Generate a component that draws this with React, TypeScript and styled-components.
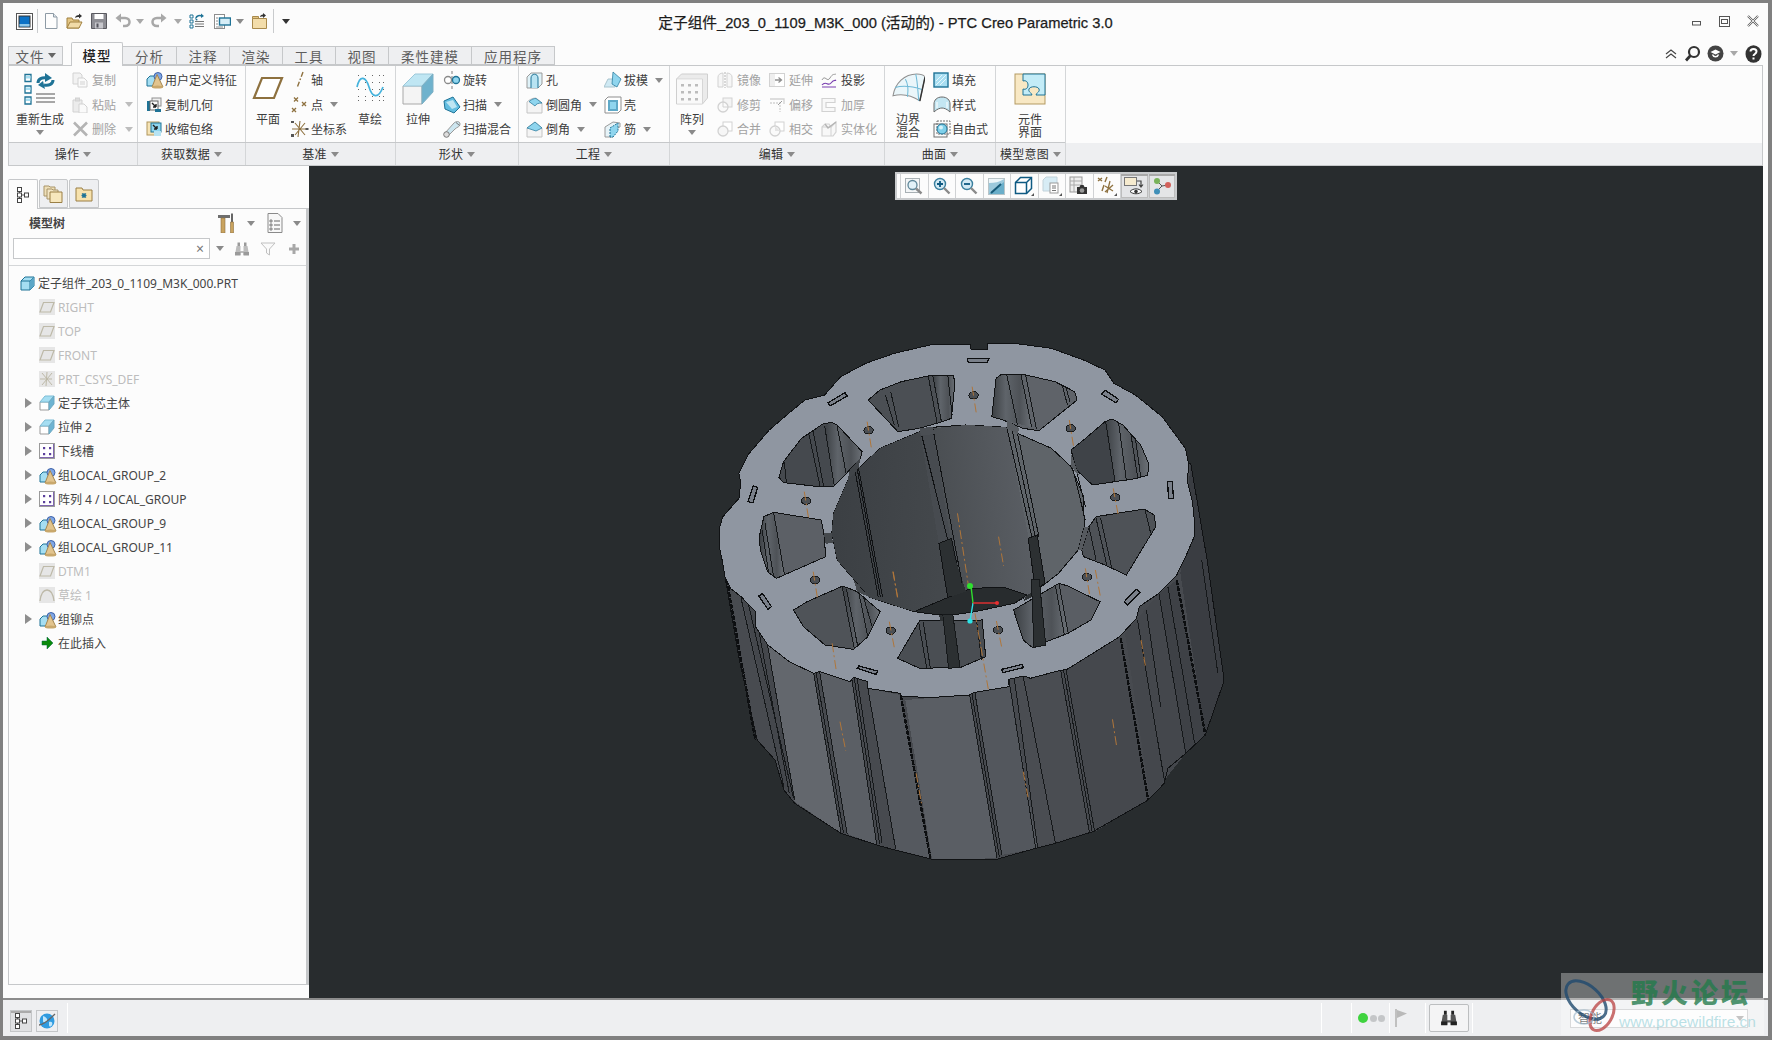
import React from 'react';
import styled, { createGlobalStyle } from 'styled-components';

const FONT = `"Noto Sans", "Noto Sans CJK SC", sans-serif`;

const GlobalStyle = createGlobalStyle`
  html, body {
    margin: 0;
    width: 1772px;
    height: 1040px;
    overflow: hidden;
    background: #fcfcfc;
  }
  * { box-sizing: border-box; }
`;

const Window = styled.div`
  width: 1772px;
  height: 1040px;
  border: solid #808080;
  border-width: 3px 4px 4px 3px;
  background: #fcfcfc;
  display: flex;
  flex-direction: column;
  font-family: ${FONT};
  font-size: 12px;
  color: #3c3c3c;
  position: relative;
`;

const TitleBar = styled.div`
  height: 39px;
  padding-bottom: 3px;
  display: grid;
  grid-template-columns: 1fr auto 1fr;
  align-items: center;
`;

const Qat = styled.div`
  display: flex;
  align-items: center;
  height: 100%;
  padding-left: 11px;
`;

const QatSlot = styled.div<{ $w: number }>`
  width: ${(p) => p.$w}px;
  display: flex;
  justify-content: center;
  align-items: center;
`;

const VSep = styled.div<{ $h?: number }>`
  width: 1px;
  height: ${(p) => p.$h ?? 24}px;
  background: #c9cbcd;
`;

const Caret = styled.span<{ $c?: string; $ml?: number; $mr?: number }>`
  display: inline-block;
  width: 0;
  height: 0;
  border-left: 4px solid transparent;
  border-right: 4px solid transparent;
  border-top: 5px solid ${(p) => p.$c ?? '#8a8a8a'};
  margin-left: ${(p) => p.$ml ?? 0}px;
  margin-right: ${(p) => p.$mr ?? 0}px;
  flex: none;
`;

const Spaced = styled.div<{ $ml?: number; $mr?: number }>`
  margin-left: ${(p) => p.$ml ?? 0}px;
  margin-right: ${(p) => p.$mr ?? 0}px;
  display: flex;
  flex: none;
`;

const Title = styled.div`
  font-family: "Liberation Sans", "Noto Sans CJK SC", sans-serif;
  font-size: 14.7px;
  color: #1c1c1c;
  -webkit-text-stroke: 0.25px #1c1c1c;
  white-space: nowrap;
`;

const WinControls = styled.div`
  display: flex;
  justify-content: flex-end;
  align-items: center;
  gap: 17px;
  padding-right: 9px;
`;

const TabRow = styled.div`
  height: 23px;
  display: flex;
  align-items: flex-end;
  padding-left: 5px;
  position: relative;
`;

const Tab = styled.div<{ $w: number; $active?: boolean; $first?: boolean }>`
  width: ${(p) => p.$w}px;
  height: ${(p) => (p.$active ? 24 : 19)}px;
  margin-right: ${(p) => (p.$first ? 8 : 0)}px;
  margin-bottom: ${(p) => (p.$active ? -1 : 0)}px;
  background: ${(p) => (p.$active ? '#fcfcfc' : '#eeeff1')};
  border: 1px solid #c6c8ca;
  border-left-width: ${(p) => (p.$first || p.$active ? 1 : 0)}px;
  border-bottom-width: ${(p) => (p.$active ? 0 : 1)}px;
  border-radius: ${(p) => (p.$active ? '2px 2px 0 0' : 0)};
  display: flex;
  align-items: center;
  justify-content: center;
  gap: 3px;
  font-size: 13.5px;
  letter-spacing: 1px;
  color: ${(p) => (p.$active ? '#222' : '#5d5d5d')};
  font-weight: ${(p) => (p.$active ? 500 : 400)};
  position: relative;
  z-index: ${(p) => (p.$active ? 2 : 1)};
`;

const HelpIcons = styled.div`
  margin-left: auto;
  margin-right: 6px;
  align-self: center;
  display: flex;
  align-items: center;
`;

const Ribbon = styled.div`
  margin: 0 5px;
  height: 101px;
  border: 1px solid #c6c8ca;
  display: flex;
  background: linear-gradient(#fcfcfc 0 77px, #eeeff1 77px);
`;

const Group = styled.div<{ $w: number }>`
  width: ${(p) => p.$w}px;
  display: flex;
  flex-direction: column;
  border-right: 1px solid #d4d6d8;
`;

/* content sits a pixel left of the group's divider, except in the first group */
const GroupBody = styled.div<{ $pl?: number; $first?: boolean }>`
  height: 77px;
  margin-left: ${(p) => (p.$first ? 0 : -1)}px;
  padding: 2px 0 0 ${(p) => p.$pl ?? 0}px;
  display: flex;
  border-bottom: 1px solid #c6c8ca;
`;

const GroupLabel = styled.div`
  flex: 1;
  display: flex;
  align-items: center;
  justify-content: center;
  gap: 4px;
  color: #333;
  letter-spacing: 0.2px;
`;

const Large = styled.div<{ $w: number }>`
  width: ${(p) => p.$w}px;
  flex: none;
  padding-top: 5px;
  display: flex;
  flex-direction: column;
  align-items: center;
  line-height: 13px;
  text-align: center;
`;

const LargeIcon = styled.div`
  height: 40px;
`;

const LargeCaret = styled(Caret)`
  margin-top: 4px;
`;

const SmallCol = styled.div<{ $w: number; $ml?: number }>`
  width: ${(p) => p.$w}px;
  margin-left: ${(p) => p.$ml ?? 0}px;
  flex: none;
`;

const SmallRow = styled.div<{ $off?: boolean; $gap?: number }>`
  height: 24.5px;
  display: flex;
  align-items: center;
  gap: ${(p) => p.$gap ?? 3}px;
  white-space: nowrap;
  color: ${(p) => (p.$off ? '#a2a2a2' : '#3c3c3c')};
`;

const RowCaret = styled(Caret)`
  margin-left: 5px;
`;

const Body = styled.div`
  flex: 1;
  display: flex;
  min-height: 0;
`;

const LeftCol = styled.div`
  width: 306px;
  padding: 13px 0 13px 5px;
  display: flex;
  flex-direction: column;
  flex: none;
`;

const PanelTabs = styled.div`
  height: 29px;
  display: flex;
  gap: 1px;
`;

const PanelTab = styled.div<{ $active?: boolean }>`
  width: 29.5px;
  height: ${(p) => (p.$active ? 30 : 29)}px;
  background: ${(p) => (p.$active ? '#fcfcfc' : '#eeeff1')};
  border: 1px solid #c6c8ca;
  border-bottom-width: ${(p) => (p.$active ? 0 : 1)}px;
  border-radius: 2px 2px 0 0;
  display: flex;
  align-items: center;
  justify-content: center;
  position: relative;
  z-index: 1;
`;

const Panel = styled.div`
  flex: 1;
  border: solid #c6c8ca;
  border-width: 1px 3px 1px 1px;
  display: flex;
  flex-direction: column;
`;

const PanelHead = styled.div`
  height: 57px;
  border-bottom: 1px solid #d4d6d8;
  padding: 0 0 0 4px;
`;

const HeadTop = styled.div`
  height: 28px;
  margin-bottom: 1px;
  display: flex;
  align-items: center;
  padding-right: 4px;
`;

const HeadTitle = styled.div`
  font-weight: 700;
  margin-left: 16px;
  color: #444;
  flex: 1;
`;

const HeadBottom = styled.div`
  display: flex;
  align-items: center;
`;

const SearchBox = styled.div`
  width: 197px;
  height: 21px;
  background: #fff;
  border: 1px solid #c6c8ca;
  display: flex;
  align-items: center;
  justify-content: flex-end;
  padding-right: 5px;
  color: #777;
  font-size: 14px;
  line-height: 1;
`;

const Tree = styled.div`
  padding-top: 5px;
`;

const TreeRow = styled.div<{ $off?: boolean; $root?: boolean }>`
  height: 24px;
  display: flex;
  align-items: center;
  padding-left: ${(p) => (p.$root ? 11 : 16)}px;
  color: ${(p) => (p.$off ? '#bdbdbd' : '#444')};
  white-space: nowrap;
`;

const Twist = styled.span<{ $hide?: boolean }>`
  width: 0;
  height: 0;
  border-top: 5px solid transparent;
  border-bottom: 5px solid transparent;
  border-left: 7px solid ${(p) => (p.$hide ? 'transparent' : '#8e8e8e')};
  margin-right: 7px;
  flex: none;
`;

const TreeIcon = styled.div<{ $off?: boolean }>`
  width: 16px;
  height: 16px;
  margin-right: 3px;
  flex: none;
  background: ${(p) => (p.$off ? '#e6e6e6' : 'transparent')};
`;

const RootIcon = styled.div`
  width: 15px;
  height: 15px;
  margin-right: 3px;
`;

const Viewport = styled.div`
  flex: 1;
  margin-right: 5px;
  background: #282c2e;
  position: relative;
`;

const ModelSvg = styled.svg`
  display: block;
  width: 100%;
  height: 100%;
  * { vector-effect: non-scaling-stroke; }
`;

const ViewBar = styled.div`
  position: absolute;
  left: 586px;
  top: 6px;
  height: 28px;
  background: #fcfcfc;
  border: 2px solid #c9cbcd;
  padding-left: 3px;
  display: flex;
  align-items: center;
`;

const ViewBtn = styled.div<{ $on?: boolean }>`
  width: 27.5px;
  height: 24px;
  border-left: 1px solid #d0d2d4;
  display: flex;
  align-items: center;
  justify-content: center;
  background: ${(p) => (p.$on ? '#e4e5e7' : 'transparent')};
  box-shadow: ${(p) => (p.$on ? 'inset 0 2px 0 #a8a8a8, inset 0 0 0 1px #bdbdbd' : 'none')};
`;

const StatusBar = styled.div`
  height: 38px;
  border-top: 2px solid #8c8c8c;
  background: #eeeff1;
  display: flex;
  align-items: center;
  padding: 0 0 0 7px;
`;

const StatusBtn = styled.div<{ $on?: boolean }>`
  width: 22px;
  height: 22px;
  margin-right: 4px;
  margin-top: 6px;
  background: ${(p) => (p.$on ? '#e0e1e3' : 'transparent')};
  border: 1px solid #c4c6c8;
  box-shadow: ${(p) => (p.$on ? 'inset 0 2px 0 #aaa' : 'none')};
  display: flex;
  align-items: center;
  justify-content: center;
`;

const StatusSep = styled.div<{ $ml: number }>`
  width: 1px;
  height: 30px;
  margin-left: ${(p) => p.$ml}px;
  background: #d4d6d8;
  border-right: 1px solid #fff;
  flex: none;
`;

const Dot = styled.span<{ $on?: boolean; $ml: number }>`
  width: ${(p) => (p.$on ? 10 : 7)}px;
  height: ${(p) => (p.$on ? 10 : 7)}px;
  margin-left: ${(p) => p.$ml}px;
  border-radius: 50%;
  background: ${(p) => (p.$on ? '#3fd33f' : '#c4c6c8')};
  flex: none;
`;

const FindBtn = styled.div`
  width: 40px;
  height: 28px;
  margin-left: 3px;
  border: 1px solid #bcbec0;
  border-radius: 2px;
  background: #f4f4f5;
  display: flex;
  align-items: center;
  justify-content: center;
  flex: none;
`;

const SmartSelect = styled.div`
  width: 178px;
  height: 19px;
  margin-left: 97px;
  background: #fcfcfc;
  border: 1px solid #c6c8ca;
  display: flex;
  align-items: center;
  justify-content: space-between;
  padding: 0 3px 0 7px;
  flex: none;
`;

const Watermark = styled.div`
  position: absolute;
  left: 1558px;
  top: 970px;
  width: 203px;
  height: 62px;
  background: rgba(255, 255, 255, 0.33);
  overflow: hidden;
`;

const WmLogo = styled.svg`
  position: absolute;
  left: 1px;
  top: 2px;
`;

const WmTitle = styled.div`
  position: absolute;
  left: 70px;
  top: 2px;
  font-family: "Noto Sans CJK SC", sans-serif;
  font-weight: 900;
  font-size: 27px;
  letter-spacing: 3px;
  line-height: 34px;
  color: rgba(34, 122, 74, 0.8);
  white-space: nowrap;
`;

const WmUrl = styled.div`
  position: absolute;
  left: 58px;
  top: 40px;
  font-family: "Liberation Sans", sans-serif;
  font-size: 15.5px;
  line-height: 18px;
  color: rgba(120, 196, 206, 0.5);
  white-space: nowrap;
`;

const SvgEl = styled.svg`
  display: block;
  flex: none;
`;

/* ---------- icons ---------- */

const BLUE = '#a5def2';
const TEAL = '#1f7396';
const TAN = '#8e713f';
const OFF = '#d2d2d2';
const OFFD = '#b4b4b4';

const Svg = ({ s = 16, v = 16, children }: { s?: number; v?: number; children: React.ReactNode }) => (
  <SvgEl width={s} height={s} viewBox={`0 0 ${v} ${v}`}>
    {children}
  </SvgEl>
);

const GroupIcon = () => (
  <Svg s={18} v={18}>
    <path d="M1 8l3-3h7v7l-3 3H1z" fill={BLUE} stroke={TEAL} />
    <circle cx="12" cy="5.5" r="4" fill="#7fa6e6" stroke="#3f63a8" />
    <path d="M11 3.5L6 16h11z" fill="#e2c48e" stroke="#a38650" />
    <ellipse cx="11.5" cy="16" rx="5.5" ry="1.5" fill="#c9a86c" />
  </Svg>
);

const ExtrudeSmall = () => (
  <Svg s={16} v={16}>
    <path d="M1 7h9v8H1z" fill="#fff" stroke="#9b9b9b" />
    <path d="M1 7l5-6h9l-5 6z" fill={BLUE} stroke="#7cbdd6" />
    <path d="M10 7l5-6v8l-5 6z" fill="#6db4d2" stroke="#6da9c2" />
  </Svg>
);

const PatternSmall = () => (
  <Svg s={16} v={16}>
    <rect x="0.5" y="0.5" width="15" height="15" fill="#fff" stroke="#9a9a9a" />
    <path d="M14.5 1v14M1 14.5h14" stroke="#8066b0" />
    {[4, 10].map((x) => [4, 10].map((y) => <rect key={`${x}${y}`} x={x} y={y} width="2.2" height="2.2" fill="#5b3f9c" />))}
  </Svg>
);

const PlaneDatum = () => (
  <Svg>
    <path d="M1 13L4.5 3.5H15L11.5 13z" fill="none" stroke="#bdb9a8" strokeWidth="1.2" />
  </Svg>
);

const TreeGlyph = ({ s = 16 }: { s?: number }) => (
  <Svg s={s} v={16}>
    <path d="M4.5 4v8M4.5 8H10" stroke="#555" fill="none" />
    <rect x="2.5" y="0.5" width="4" height="4" fill="#fff" stroke="#444" />
    <rect x="2.5" y="6" width="4" height="4" fill="#fff" stroke="#444" />
    <rect x="2.5" y="11.5" width="4" height="4" fill="#fff" stroke="#444" />
    <rect x="9.5" y="6" width="4" height="4" fill="#fff" stroke="#444" />
  </Svg>
);

const Binoculars = ({ s = 16, c = '#bcbcbc', d = '#9a9a9a' }: { s?: number; c?: string; d?: string }) => (
  <Svg s={s} v={16}>
    <path d="M2.500 5h4v5h3V5h4l1.500 9H9.500v-2h-3v2H1z" fill={c} />
    <path d="M3.500 1.500h2.500v3.500H3.500zM10 1.500h2.500v3.500H10z" fill={d} />
    <path d="M1 11h5.500v3.500H1zM9.500 11H15v3.500H9.500z" fill={d} />
  </Svg>
);

const QAT_ICONS = {
  app: (
    <Svg s={17} v={17}>
      <rect x="0.5" y="0.5" width="16" height="16" fill="#fff" stroke="#555" />
      <rect x="3" y="3" width="11" height="11" fill="#0c72c6" stroke="#333" />
      <rect x="3.500" y="11" width="10" height="2.500" fill="#8fc8ea" />
    </Svg>
  ),
  file: (
    <Svg s={16} v={16}>
      <path d="M2.500 0.500h8l3.500 3.500v11.500H2.500z" fill="#fdfdfd" stroke="#8d9aa5" />
      <path d="M10.500 0.500v3.500h3.500" fill="#dfe6ec" stroke="#8d9aa5" />
    </Svg>
  ),
  open: (
    <Svg s={17} v={17}>
      <path d="M1 15V5h5l1 2h6v8z" fill="#e4c684" stroke="#a0803f" />
      <path d="M1 15l3-6h12l-3 6z" fill="#f1dba8" stroke="#a0803f" />
      <path d="M9 5c0-2 2-3 4-3V0.500l3 2.500-3 2.500V4c-1.500 0-3 0-4 1z" fill="#333" />
    </Svg>
  ),
  save: (
    <Svg s={16} v={16}>
      <path d="M0.500 0.500h15v15H0.500z" fill="#8e8e94" stroke="#5a5a60" />
      <rect x="3.500" y="1" width="9" height="5" fill="#fff" />
      <rect x="4" y="9.500" width="8" height="6" fill="#c7c7cc" />
      <rect x="5.500" y="10.500" width="2" height="4" fill="#55555c" />
    </Svg>
  ),
  undo: (
    <Svg s={16} v={16}>
      <path d="M5 5h5c6 0 6 8 0 8H8" fill="none" stroke="#a8a8a8" strokeWidth="2.500" />
      <path d="M6 0.500v9L0.500 5z" fill="#a8a8a8" />
    </Svg>
  ),
  redo: (
    <Svg s={16} v={16}>
      <path d="M11 5H6c-6 0-6 8 0 8h2" fill="none" stroke="#a8a8a8" strokeWidth="2.500" />
      <path d="M10 0.500v9L15.500 5z" fill="#a8a8a8" />
    </Svg>
  ),
  regen: (
    <Svg s={16} v={16}>
      <path d="M1 2h3v3H1zM1 7h3v3H1zM1 12h3v3H1z" fill="#fff" stroke={TEAL} />
      <path d="M7 5a4 3 0 0 1 6-2" fill="none" stroke={TEAL} strokeWidth="1.600" />
      <path d="M12 0.500l3 2.500-3 2z M9 7l-3-2.500 1 3z" fill={TEAL} />
      <path d="M6 8.500h9M6 11h9M6 13.500h9" stroke="#777" />
    </Svg>
  ),
  win: (
    <Svg s={17} v={17}>
      <rect x="0.500" y="1.500" width="10" height="14" fill="#fff" stroke="#8e8e8e" />
      <rect x="5.500" y="5" width="11" height="7" fill="#d7eef7" stroke={TEAL} strokeWidth="1.400" />
      <path d="M2 5h2M2 8h2M2 11h2M2 14h7" stroke="#8e8e8e" />
    </Svg>
  ),
  folder: (
    <Svg s={17} v={17}>
      <path d="M1.500 15.500V5.500h14v10z" fill="#f3ddaa" stroke="#a98a4c" />
      <path d="M1.500 5.500V3.500h6v2z" fill="#e4c684" stroke="#a98a4c" />
      <path d="M9 4c0-1.500 1.500-2.500 3-2.500V0l3 2.500L12 5V3.500C11 3.500 10 3.500 9 4z" fill="#333" />
    </Svg>
  ),
};

const R = {
  regen: (
    <Svg s={32} v={32}>
      <path d="M1 1.500h6v7H1zM1 13h6v7H1zM1 24h6v7H1z" fill="#fff" stroke={TEAL} strokeWidth="1.300" />
      <path d="M2 3h4.500v2.500H2zM2 14.500h4.500V17H2zM2 25.500h4.500V28H2z" fill={BLUE} />
      <path d="M14 10c0-4 4-6 9-5" fill="none" stroke={TEAL} strokeWidth="3" />
      <path d="M21 0l7 5-7 4z" fill={TEAL} />
      <path d="M29 7c0 4-4 6-9 5" fill="none" stroke={TEAL} strokeWidth="3" />
      <path d="M21 16l-7-4 5-4z" fill={TEAL} />
      <path d="M12 21h19M12 25h19M12 29h19" stroke="#8a8a8a" strokeWidth="1.600" />
    </Svg>
  ),
  copy: (
    <Svg>
      <path d="M1 1h7l2 2v9H1z" fill="#f2f2f2" stroke={OFF} />
      <path d="M6 6h6l3 3v6H6z" fill="#fafafa" stroke={OFF} />
      <path d="M8 10h5M8 12h5" stroke={OFF} />
    </Svg>
  ),
  paste: (
    <Svg>
      <path d="M1 3h9v12H1z" fill="#ececec" stroke={OFF} />
      <rect x="3.500" y="1" width="4" height="3" fill="#ddd" stroke={OFF} />
      <path d="M7 7h5l3 3v6H7z" fill="#fafafa" stroke={OFF} />
    </Svg>
  ),
  del: (
    <Svg>
      <path d="M2 1.500L15 14.500M15 1.500L2 14.500" stroke={OFFD} strokeWidth="2.600" />
    </Svg>
  ),
  udf: <GroupIcon />,
  copyGeom: (
    <Svg>
      <path d="M1 14V4h3v10z" fill={TEAL} />
      <rect x="6" y="1" width="9" height="8" fill="#f0f0f0" stroke="#8f8f8f" />
      <rect x="4" y="4" width="8" height="9" fill="#fafafa" stroke="#666" />
      <path d="M6 6l4 4M10 10V7M10 10H7" stroke="#222" strokeWidth="1.400" fill="none" />
      <rect x="9" y="12" width="6" height="3" fill={TEAL} />
    </Svg>
  ),
  shrink: (
    <Svg>
      <rect x="1" y="1" width="12" height="13" fill="#f6e4b6" stroke="#b0965c" />
      <rect x="5" y="2" width="10" height="9" fill="#8fd5ee" stroke={TEAL} />
      <path d="M7 4l4 4M11 8V5M11 8H8" stroke="#222" strokeWidth="1.400" fill="none" />
      <rect x="8" y="10" width="7" height="5" fill="#b7e3f2" />
    </Svg>
  ),
  plane: (
    <Svg s={32} v={32}>
      <path d="M2 25L10 5h20l-8 20z" fill="#fff" stroke={TAN} strokeWidth="2.200" />
    </Svg>
  ),
  axis: (
    <Svg s={18} v={18}>
      <path d="M12 1L6 17" stroke={TAN} strokeWidth="1.400" strokeDasharray="5 2 1.500 2" />
    </Svg>
  ),
  point: (
    <Svg s={18} v={18}>
      <path d="M3 1.500l4 4M7 1.500l-4 4M11 6l4 4M15 6l-4 4M1 12l4 4M5 12l-4 4" stroke={TAN} strokeWidth="1.300" />
    </Svg>
  ),
  csys: (
    <Svg s={18} v={18}>
      <path d="M9 1L7 17M1 9l14 0M4 3l10 12M14 3L4 15" stroke={TAN} strokeWidth="1.100" />
      <path d="M0 1h3v2H0zM14.500 8h3v2h-3zM0 14h3v3H0z" fill="#555" />
    </Svg>
  ),
  sketch: (
    <Svg s={28} v={28}>
      {[2, 9, 16, 23, 27].map((x) => [2, 9, 16, 23, 27].map((y) => <rect key={`${x}-${y}`} x={x} y={y} width="1" height="1" fill="#666" />))}
      <path d="M1 14C4 1 10 4 13 14s9 13 14 0" fill="none" stroke="#45b3dd" strokeWidth="1.700" />
    </Svg>
  ),
  extrude: (
    <Svg s={32} v={32}>
      <path d="M1 13h19v18H1z" fill="#f4f4f4" stroke="#a8a8a8" />
      <path d="M1 13L13 1h18L20 13z" fill="#bfe6f3" stroke="#9cc8da" />
      <path d="M20 13L31 1v18L20 31z" fill="#6fb2cd" stroke="#7fb0c4" />
    </Svg>
  ),
  revolve: (
    <Svg s={18} v={18}>
      <path d="M9 0v18" stroke="#7d7d7d" strokeDasharray="3 2" />
      <circle cx="5" cy="9" r="3.500" fill="#fff" stroke="#8a8a8a" strokeWidth="1.300" />
      <circle cx="13" cy="9" r="3.500" fill="#8fd5ee" stroke={TEAL} strokeWidth="1.300" />
    </Svg>
  ),
  sweep: (
    <Svg s={18} v={18}>
      <path d="M1 5l9-4 7 10-6 6-9-4z" fill="#63bde0" stroke={TEAL} />
      <path d="M3 6l7-2 4 7-5 2z" fill="#bfe6f3" />
    </Svg>
  ),
  sweptBlend: (
    <Svg s={18} v={18}>
      <path d="M2 13L11 3c2-2 6-2 6 1s-3 3-5 5l-7 7z" fill="#cde6f0" stroke="#999" />
      <circle cx="3.500" cy="14.500" r="2.800" fill="#ddd" stroke="#777" />
      <path d="M13 2.500l3.500 3" stroke="#777" />
    </Svg>
  ),
  hole: (
    <Svg s={18} v={18}>
      <path d="M1 6l4-4h11v11l-4 4H1z" fill="#dff2f8" stroke="#9a9a9a" />
      <path d="M5 17V7c0-5 7-5 7 0v10" fill="#b8e3f2" stroke={TEAL} />
    </Svg>
  ),
  round: (
    <Svg s={18} v={18}>
      <path d="M1 6c3-3 6-4 9-4l6 5v10H1z" fill="#f4f4f4" stroke="#c4c4c4" />
      <path d="M3 5.500C6 3 8 2.500 10 2.500l6 4.500c-4 0-6 1-7 3z" fill="#8fd5ee" stroke={TEAL} strokeWidth="0.700" />
    </Svg>
  ),
  chamfer: (
    <Svg s={18} v={18}>
      <path d="M1 8l8-6 7 6v9H1z" fill="#f4f4f4" stroke="#c4c4c4" />
      <path d="M1 8l8-6 7 6-6 3z" fill="#8fd5ee" stroke={TEAL} strokeWidth="0.700" />
    </Svg>
  ),
  draft: (
    <Svg s={18} v={18}>
      <path d="M0 16l4-8h7v8z" fill="#cfe9f3" stroke="#a8c4ce" />
      <path d="M9 1l8 7-4 8-5-3z" fill="#8fd5ee" stroke={TEAL} strokeWidth="0.700" />
    </Svg>
  ),
  shell: (
    <Svg s={18} v={18}>
      <path d="M1 4l3-3h13v13l-3 3H1z" fill="#fff" stroke="#8f8f8f" />
      <rect x="4" y="4" width="10" height="11" fill="#5ea9c8" />
      <rect x="6" y="6" width="6" height="7" fill="#8fd5ee" />
    </Svg>
  ),
  rib: (
    <Svg s={18} v={18}>
      <path d="M1 17V7l8-5 7 1v4l-7 2v8z" fill="#e6f3f8" stroke="#9a9a9a" />
      <path d="M6 17V8l8-5v8l-5 6z" fill="#8fd5ee" stroke={TEAL} strokeDasharray="2 1" />
    </Svg>
  ),
  pattern: (
    <Svg s={32} v={32}>
      <path d="M0.500 6l5-5h26v24l-5 6H0.500z" fill="#ebebeb" stroke="#cfcfcf" />
      <path d="M26.500 6v25M0.500 6h26" stroke="#d6d6d6" />
      <rect x="1" y="6.500" width="25" height="24" fill="#f9f9f9" />
      {[5, 12, 19].map((x) => [11, 18, 25].map((y) => <rect key={`${x}-${y}`} x={x} y={y} width="3" height="2.500" fill="#bcbcbc" />))}
    </Svg>
  ),
  mirror: (
    <Svg>
      <path d="M1 15V5c0-2 2-4 5-4v14zM10 1c3 0 5 2 5 4v10h-5z" fill="#f6f6f6" stroke={OFF} />
      <path d="M8 0v16" stroke={OFFD} strokeDasharray="2 1" />
    </Svg>
  ),
  extend: (
    <Svg>
      <rect x="0.500" y="1.500" width="15" height="13" fill="#fff" stroke={OFF} />
      <rect x="1" y="2" width="5" height="12" fill="#eee" />
      <path d="M6 8h6M9.500 5.500L12.500 8l-3 2.500" stroke="#8f8f8f" strokeWidth="1.300" fill="none" />
    </Svg>
  ),
  project: (
    <Svg>
      <path d="M1 8c3-6 5 3 8-2s4-3 6-4" fill="none" stroke="#999" />
      <path d="M1 13c4-5 6 2 9-2s4-2 5-3" fill="none" stroke="#7a3fb0" strokeWidth="1.200" />
      <path d="M1 15h14" stroke="#7a3fb0" />
    </Svg>
  ),
  trim: (
    <Svg>
      <rect x="6" y="1" width="9" height="9" fill="#f4f4f4" stroke={OFF} />
      <circle cx="6" cy="10" r="5" fill="#fafafa" stroke={OFF} strokeWidth="1.300" />
      <path d="M6 5v5h5" stroke={OFF} fill="none" />
    </Svg>
  ),
  offset: (
    <Svg>
      <path d="M1 2h14v5" fill="none" stroke={OFF} strokeWidth="1.300" />
      <path d="M1 6h10v9" fill="none" stroke={OFF} strokeDasharray="2 1" strokeWidth="1.300" />
      <path d="M9 8l4-4" stroke="#9a9a9a" />
    </Svg>
  ),
  thicken: (
    <Svg>
      <path d="M1 1.500h13v4H5v5h9v4H1z" fill="#f8f8f8" stroke={OFF} strokeWidth="1.200" />
    </Svg>
  ),
  merge: (
    <Svg>
      <rect x="6" y="1" width="9" height="9" fill="#fff" stroke={OFF} />
      <circle cx="6" cy="10" r="5" fill="#f6f6f6" stroke={OFF} strokeWidth="1.300" />
    </Svg>
  ),
  intersect: (
    <Svg>
      <rect x="6" y="1" width="9" height="9" fill="#fff" stroke={OFF} />
      <circle cx="6" cy="10" r="5" fill="#fafafa" stroke={OFF} strokeWidth="1.300" />
      <path d="M6 5v5h5" fill="#e4e4e4" />
    </Svg>
  ),
  solidify: (
    <Svg>
      <path d="M1 6l3-3h4l2 3 5-5v10l-3 4H1z" fill="#f8f8f8" stroke={OFF} strokeWidth="1.200" />
      <path d="M1 6h9v9" fill="none" stroke={OFF} />
      <path d="M4 3l3 4 8-6" fill="none" stroke={OFFD} strokeWidth="1.300" />
    </Svg>
  ),
  boundary: (
    <Svg s={33} v={32}>
      <path d="M1 22C3 10 12 1 24 1c4 0 7 1 8 3l-5 23C18 21 9 20 1 22z" fill="#eaf6fa" stroke="#909090" />
      <path d="M13 6c3 5 3 10 2 17M3 14c8-2 17-1 26 2M23 1c2 8 2 18 3 26" fill="none" stroke="#6fb9d6" />
      <path d="M27 27l5-23" stroke="#333" strokeWidth="1.400" />
    </Svg>
  ),
  fill: (
    <Svg>
      <rect x="1" y="1" width="14" height="14" fill="#a9def1" stroke={TEAL} strokeWidth="1.400" />
      <path d="M3 9l6-6M3 13L13 3M7 13l6-6" stroke="#e6f7fc" />
    </Svg>
  ),
  style: (
    <Svg s={18} v={18}>
      <path d="M1 16V8c0-4 3-7 8-7s8 3 8 7v8c-3-3-6-4-8-4s-5 1-8 4z" fill="#c3e6f2" stroke="#6a6a6a" />
      <path d="M4 12V6M14 12V6" stroke="#fff" />
    </Svg>
  ),
  free: (
    <Svg s={18} v={18}>
      <rect x="1" y="4" width="13" height="13" fill="none" stroke="#707070" />
      <rect x="4" y="1" width="13" height="13" fill="none" stroke="#707070" strokeDasharray="2 1" />
      <circle cx="9" cy="9" r="5" fill="#7fd0ea" stroke={TEAL} />
      <circle cx="8" cy="7.500" r="2" fill="#d6f1f9" />
    </Svg>
  ),
  comp: (
    <Svg s={32} v={32}>
      <rect x="1" y="1" width="30" height="30" fill="#f8e8c4" stroke="#b39a62" />
      <path d="M9 1h22v21h-9c1-3 4-3 3-6s-9-3-10 0 2 3 3 6H9v-6c3 1 5-1 5-4s-2-5-5-4z" fill="#c3ecf7" stroke={TEAL} />
    </Svg>
  ),
};

const CornerMark = () => <path d="M20 17v3h-3z" fill="#555" />;

const VIEW_ICONS = [
  <Svg key="a" s={18} v={18}>
    <rect x="0.500" y="1.500" width="14" height="14" fill="#f4f6f7" stroke="#a8b0b4" />
    <circle cx="7.500" cy="8" r="4.500" fill="#e3f2f8" stroke="#5f8799" strokeWidth="1.300" />
    <path d="M11 11.500L16.500 16.500" stroke="#8a8a8a" strokeWidth="2.400" />
  </Svg>,
  <Svg key="b" s={18} v={18}>
    <circle cx="7" cy="7" r="5.500" fill="#d3eaf4" stroke="#3a7f9e" strokeWidth="1.400" />
    <path d="M4 7h6M7 4v6" stroke="#0e5a82" strokeWidth="1.800" />
    <path d="M11 11L16.500 16.500" stroke="#8a8a8a" strokeWidth="2.400" />
  </Svg>,
  <Svg key="c" s={18} v={18}>
    <circle cx="7" cy="7" r="5.500" fill="#d3eaf4" stroke="#3a7f9e" strokeWidth="1.400" />
    <path d="M4 7h6" stroke="#0e5a82" strokeWidth="1.800" />
    <path d="M11 11L16.500 16.500" stroke="#8a8a8a" strokeWidth="2.400" />
  </Svg>,
  <Svg key="d" s={17} v={17}>
    <rect x="0.500" y="0.500" width="16" height="16" fill="#eef6f9" stroke="#b8c4c8" />
    <path d="M1 5c6 0 10-1 15-4v15H1z" fill="#9cc9dc" />
    <path d="M1 16h15V4z" fill="#6aaec9" />
    <path d="M3 15L13 6" stroke="#175a78" strokeWidth="2" />
  </Svg>,
  <Svg key="e" s={20} v={20}>
    <path d="M1.500 6.500l5-5h11v11l-5 5h-11z" fill="#fff" stroke="#0e5a82" strokeWidth="1.500" />
    <path d="M1.500 6.500h11v11M12.500 6.500l5-5" fill="none" stroke="#0e5a82" strokeWidth="1.500" />
    <CornerMark />
  </Svg>,
  <Svg key="f" s={20} v={20}>
    <path d="M1 4l3-3h11v14H1z" fill="#d7ecf5" stroke="#c2d2da" />
    <rect x="8" y="7" width="8" height="10" fill="#fff" stroke="#999" />
    <path d="M10 10h4M10 12h4M10 14.500h4" stroke="#777" />
    <CornerMark />
  </Svg>,
  <Svg key="g" s={20} v={20}>
    <rect x="1" y="1" width="12" height="15" fill="#eee" stroke="#999" />
    <path d="M1 5h12M1 9h12M5 1v15" stroke="#aaa" />
    <path d="M8 11h2.500l1-2h3l1 2H18v7H8z" fill="#333" />
    <circle cx="13" cy="14.500" r="2.300" fill="#999" />
  </Svg>,
  <Svg key="h" s={20} v={20}>
    <path d="M1 2l4 3M5 2L1 5M10 1L8 6M7 9l-2 6" stroke={TAN} strokeWidth="1.400" />
    <path d="M13 5L10 17M8 10l8 5M16 9l-8 7" stroke={TAN} strokeWidth="1.300" />
    <CornerMark />
  </Svg>,
  <Svg key="i" s={20} v={20}>
    <rect x="0.500" y="1.500" width="12" height="8" fill="#f6ebcf" stroke="#777" />
    <path d="M13 5h4v5M15 8.500l2 2.500 2-2.500" fill="none" stroke="#444" strokeWidth="1.200" />
    <path d="M6 15.500c3-3.500 9-3.500 12 0-3 3-9 3-12 0z" fill="#fff" stroke="#333" />
    <circle cx="12" cy="15.500" r="1.800" fill="#333" />
  </Svg>,
  <Svg key="j" s={20} v={20}>
    <path d="M5 5l5 5 6-1M10 10l-5 5" stroke="#555" fill="none" />
    <circle cx="5" cy="5" r="3" fill="#78b25a" />
    <circle cx="16" cy="9" r="3" fill="#d2615c" />
    <circle cx="5" cy="15.500" r="3" fill="#3f8fb8" />
  </Svg>,
];

/* ---------- 3d model ---------- */

type Pt = number[];

// the top rim and windows are traced in one crop's grid, the lower half in another
const low = (pts: Pt[]): Pt[] => pts.map(([x, y]) => [x + 56, y + 720]);
const pth = (pts: Pt[]) => pts.map((p) => p.join(',')).join(' ');

const SIDE: Pt[] = low([
  [62, 0], [70, 50], [110, 300], [160, 540], [210, 600], [235, 690], [265, 730], [395, 820], [495, 855], [545, 870],
  [650, 898], [830, 898], [940, 865], [995, 850], [1100, 815], [1255, 720], [1300, 670], [1310, 625], [1360, 580],
  [1415, 525], [1465, 370], [1465, 340], [1420, 0], [1374, -290], [1300, -290],
]);

const FACE: Pt[] = [
  [110, 625], [120, 590], [165, 535], [170, 490], [165, 460], [190, 405], [250, 330], [310, 275], [350, 240], [405, 225],
  [450, 170], [520, 130], [600, 100], [700, 75], [770, 75], [812, 72], [815, 88], [860, 88], [862, 72], [950, 72],
  [1040, 85], [1130, 120], [1190, 150], [1215, 190], [1275, 225], [1350, 290], [1415, 385], [1425, 435], [1420, 480],
  [1435, 545], [1440, 600], [1440, 650], [1420, 700],
  ...low([
    [1355, 0], [1335, 45], [1285, 100], [1230, 140], [1222, 175], [1175, 230], [1100, 280], [1028, 328], [1005, 332],
    [925, 355], [908, 348], [863, 358], [866, 380], [765, 398], [755, 405], [640, 413], [565, 408], [560, 400],
    [470, 385], [470, 365], [430, 352], [420, 365], [335, 335], [318, 340], [250, 305], [190, 255], [155, 200],
    [155, 155], [115, 110], [85, 85], [70, 50], [62, 0],
  ]),
  [110, 680],
];

type Band = { pts: Pt[]; fill: string };
const BANDS: Band[] = [
  { pts: [[120, 115], [185, 230], [265, 725], [235, 680]], fill: '#44474c' },
  { pts: [[85, 85], [120, 115], [235, 680], [210, 600], [160, 540]], fill: '#484b50' },
  { pts: [[185, 230], [318, 338], [395, 820], [265, 725]], fill: '#63676d' },
  { pts: [[335, 335], [425, 355], [495, 855], [412, 822]], fill: '#5b5f65' },
  { pts: [[470, 385], [562, 405], [645, 895], [548, 868]], fill: '#55595f' },
  { pts: [[575, 420], [755, 405], [832, 895], [650, 898]], fill: '#5a5e64' },
  { pts: [[770, 400], [865, 360], [945, 865], [845, 885]], fill: '#53575d' },
  { pts: [[880, 355], [1010, 332], [1090, 815], [945, 860]], fill: '#4a4d52' },
  { pts: [[1025, 330], [1178, 235], [1255, 720], [1105, 815]], fill: '#45484d' },
  { pts: [[1190, 220], [1285, 100], [1360, 580], [1260, 715]], fill: '#44474c' },
  { pts: [[1285, 100], [1335, 60], [1415, 525], [1360, 580]], fill: '#3e4146' },
  { pts: [[1345, 40], [1374, -290], [1420, 0], [1465, 340], [1465, 370], [1415, 525]], fill: '#3a3d42' },
];

const SIDE_THIN: Pt[][] = [
  [[115, 115], [235, 680]], [[135, 130], [262, 715]], [[185, 230], [265, 720]], [[165, 215], [250, 700]],
  [[318, 338], [395, 820]], [[335, 335], [412, 822]], [[325, 338], [402, 820]], [[425, 355], [495, 855]],
  [[432, 355], [503, 852]], [[440, 355], [510, 850]], [[470, 385], [548, 868]], [[755, 405], [832, 895]],
  [[762, 403], [838, 890]], [[770, 400], [845, 885]], [[865, 360], [940, 865]], [[880, 355], [945, 860]],
  [[905, 350], [995, 848]], [[1010, 332], [1090, 815]], [[1025, 330], [1105, 815]], [[1018, 330], [1098, 815]],
  [[1225, 180], [1300, 660]], [[1285, 100], [1360, 580]], [[1250, 150], [1290, 440]], [[1310, 80], [1385, 550]],
  [[1405, 0], [1450, 340]],
];

const SIDE_THICK: Pt[][] = [
  [[75, 60], [155, 540]], [[562, 405], [645, 895]], [[1178, 235], [1255, 720]], [[1335, 60], [1415, 525]],
];

type Win = { pts: Pt[]; fill: string; lines: Pt[][]; lit?: Pt[] };
const WINDOWS: Win[] = [
  {
    pts: [[527, 240], [560, 210], [620, 185], [695, 168], [765, 168], [770, 185], [760, 295], [725, 308], [670, 325], [610, 335]],
    fill: '#4b4f54',
    lit: [[708, 168], [765, 168], [770, 185], [760, 295], [732, 305]],
    lines: [[[575, 225], [600, 315]], [[590, 215], [612, 320]], [[695, 168], [720, 310]], [[708, 168], [732, 305]], [[750, 168], [762, 285]]],
  },
  {
    pts: [[885, 175], [900, 163], [960, 163], [1050, 185], [1105, 215], [1112, 240], [1005, 332], [960, 325], [905, 300], [873, 290]],
    fill: '#5f6369',
    lit: [[885, 175], [900, 163], [955, 163], [985, 322], [905, 300], [873, 290]],
    lines: [[[915, 165], [945, 315]], [[955, 165], [985, 322]], [[968, 165], [998, 328]], [[1070, 195], [1085, 255]], [[1080, 200], [1092, 245]]],
  },
  {
    pts: [[277, 472], [290, 425], [340, 355], [400, 312], [425, 307], [440, 315], [510, 395], [505, 415], [475, 450], [430, 500], [390, 500], [290, 488]],
    fill: '#45494e',
    lit: [[405, 318], [425, 307], [440, 315], [510, 395], [505, 415], [475, 450], [430, 500]],
    lines: [[[360, 338], [392, 498]], [[372, 330], [402, 498]], [[405, 318], [432, 498]], [[440, 318], [465, 460]], [[292, 425], [298, 488]]],
  },
  {
    pts: [[1095, 390], [1130, 360], [1190, 305], [1210, 297], [1240, 315], [1290, 375], [1312, 430], [1310, 465], [1280, 475], [1155, 495], [1110, 450]],
    fill: '#3f4348',
    lit: [[1190, 305], [1210, 297], [1240, 315], [1290, 375], [1312, 430], [1310, 465], [1280, 475], [1218, 485]],
    lines: [[[1192, 305], [1218, 485]], [[1228, 308], [1250, 482]], [[1262, 340], [1282, 475]], [[1275, 355], [1290, 470]]],
  },
  {
    pts: [[222, 650], [235, 590], [262, 577], [395, 600], [403, 640], [408, 710], [270, 775], [245, 755], [225, 690]],
    fill: '#5c6066',
    lit: [[222, 650], [235, 590], [262, 577], [292, 762], [270, 775], [245, 755], [225, 690]],
    lines: [[[262, 577], [292, 762]], [[230, 630], [248, 758]], [[238, 610], [262, 770]]],
  },
  {
    pts: [[1125, 690], [1145, 620], [1165, 590], [1300, 567], [1328, 585], [1332, 620], [1250, 765], [1190, 735], [1130, 710]],
    fill: '#4e5257',
    lines: [[[1165, 595], [1195, 735]], [[1178, 595], [1208, 740]], [[1145, 620], [1165, 720]], [[1302, 570], [1318, 640]]],
  },
  {
    pts: low([[262, 150], [300, 125], [400, 78], [440, 95], [505, 155], [470, 230], [430, 268], [350, 255], [290, 200]]),
    fill: '#4f5358',
    lit: low([[400, 78], [440, 95], [505, 155], [470, 230], [430, 268]]),
    lines: [],
  },
  {
    pts: low([[553, 295], [615, 182], [790, 180], [800, 290], [730, 322], [615, 325]]),
    fill: '#4a4e53',
    lines: [],
  },
  {
    pts: low([[878, 150], [1005, 70], [1030, 78], [1120, 125], [1095, 180], [1030, 220], [930, 262], [905, 240]]),
    fill: '#5a5e64',
    lit: low([[878, 150], [1005, 70], [1030, 220], [930, 262], [905, 240]]),
    lines: [],
  },
];

const WINDOW_LINES: Pt[][] = [
  [[398, 80], [432, 266]], [[410, 88], [442, 260]], [[445, 100], [470, 230]], [[458, 112], [482, 200]],
  [[612, 185], [635, 325]], [[625, 185], [645, 325]], [[775, 185], [788, 300]],
  [[995, 75], [1020, 222]], [[1005, 70], [1030, 215]],
];

// openings between the tooth tips, where a window runs into the bore
const TOOTH_GAPS: { pts: Pt[]; fill: string }[] = [
  { pts: [[670, 325], [708, 320], [712, 342], [675, 347]], fill: '#4b4f54' },
  { pts: [[915, 300], [950, 325], [945, 342], [915, 325]], fill: '#585c61' },
  { pts: [[505, 415], [475, 450], [470, 480], [500, 445]], fill: '#404448' },
  { pts: [[1095, 400], [1112, 452], [1120, 470], [1095, 440]], fill: '#55595e' },
  { pts: [[403, 640], [408, 672], [428, 668], [425, 640]], fill: '#45494d' },
  { pts: [[1125, 690], [1145, 620], [1132, 620], [1115, 690]], fill: '#565a5f' },
  { pts: low([[430, 60], [460, 95], [475, 112], [440, 95]]), fill: '#45494d' },
  { pts: low([[670, 165], [708, 165], [708, 182], [672, 182]]), fill: '#2c3032' },
  { pts: low([[915, 105], [945, 90], [950, 100], [905, 125]]), fill: '#2c3032' },
];

const DARK_SLOTS: Pt[][] = [
  [[725, 670], [760, 655], [790, 810], [750, 835]],
  [[975, 655], [1000, 645], [1022, 790], [995, 808]],
  low([[680, 165], [708, 165], [728, 322], [696, 325]]),
  low([[678, 0], [715, 0], [745, 95], [700, 110]]),
  low([[928, 60], [950, 60], [968, 255], [935, 262]]),
];

const BORE: Pt[] = [
  [500, 445], [560, 385], [660, 340], [705, 322], [800, 315], [915, 322], [945, 340], [1040, 385], [1095, 440], [1130, 530],
  [1132, 620], [1115, 690], [1060, 760], [1000, 810], [936, 850], [826, 875], [764, 885], [726, 885], [656, 875], [531, 832],
  [440, 720], [425, 640], [430, 580], [470, 480],
];

const BORE_LEFT: Pt[] = [[500, 445], [560, 385], [672, 335], [790, 880], [726, 885], [656, 875], [531, 832], [440, 720], [425, 640], [430, 580], [470, 480]];
const BORE_STRIP: Pt[] = [[672, 335], [708, 325], [790, 790], [750, 830]];
const BORE_MID: Pt[] = [[708, 325], [800, 315], [915, 322], [1005, 810], [936, 850], [826, 875], [790, 880]];
const THROUGH: Pt[] = low([[600, 155], [700, 110], [760, 85], [850, 82], [915, 105], [880, 130], [770, 155], [708, 165], [670, 165]]);
const BORE_LINES: Pt[][] = [
  [[672, 325], [750, 660]], [[708, 325], [790, 790]], [[915, 322], [985, 650]], [[945, 340], [1005, 650]], [[930, 330], [995, 650]],
  [[488, 440], [555, 830]], [[500, 445], [567, 830]], [[495, 440], [561, 830]],
  [[1098, 440], [1135, 600]], [[1112, 460], [1135, 560]],
];

const SLOT_MARKS: Pt[][] = [
  [[805, 115], [865, 115], [860, 128], [807, 128]],
  [[415, 248], [462, 218], [468, 228], [420, 258]],
  [[1180, 222], [1190, 210], [1228, 238], [1220, 248]],
  [[190, 545], [205, 498], [218, 502], [204, 548]],
  [[1365, 485], [1378, 485], [1382, 535], [1368, 535]],
  ...[
    [[165, 108], [175, 100], [200, 140], [190, 148]],
    [[440, 325], [445, 318], [497, 333], [493, 343]],
    [[845, 328], [903, 313], [905, 323], [848, 338]],
    [[1188, 125], [1222, 88], [1232, 97], [1197, 135]],
  ].map(low),
];

const BOLTS: Pt[] = [[822, 226], [528, 331], [1094, 325], [353, 542], [1219, 532], [378, 780], [1139, 771], [590, 932], [891, 930]];

const ORANGE: Pt[][] = [
  [[818, 200], [830, 282]], [[524, 305], [536, 385]], [[1090, 300], [1102, 380]], [[348, 515], [360, 595]], [[1213, 505], [1227, 585]],
  [[373, 755], [385, 835]], [[1135, 745], [1147, 825]], [[1163, 750], [1178, 835]], [[777, 580], [808, 800]], [[892, 650], [906, 738]],
  [[597, 755], [610, 840]], [[586, 905], [601, 988]], [[886, 903], [901, 983]], [[426, 970], [438, 1055]], [[596, 755], [611, 840]],
  [[826, 880], [864, 1112]], [[448, 1205], [464, 1292]], [[661, 1360], [676, 1450]], [[961, 1355], [976, 1440]], [[1211, 1198], [1223, 1282]],
  [[1291, 960], [1304, 1045]],
];

const Model = () => (
  <ModelSvg viewBox="309 166 1454 832" preserveAspectRatio="none">
    <defs>
      <linearGradient id="lit" x1="0" x2="1" y1="0" y2="0">
        <stop offset="0" stopColor="#3b3f43" />
        <stop offset="0.35" stopColor="#5f646a" />
        <stop offset="0.7" stopColor="#4e5257" />
        <stop offset="1" stopColor="#6b7076" />
      </linearGradient>
      <linearGradient id="boreLeft" x1="0" x2="1" y1="0" y2="0.1">
        <stop offset="0" stopColor="#3b3f43" />
        <stop offset="1" stopColor="#45494d" />
      </linearGradient>
      <linearGradient id="boreMid" x1="0" x2="1" y1="0.2" y2="0">
        <stop offset="0" stopColor="#4a4e52" />
        <stop offset="1" stopColor="#5d6167" />
      </linearGradient>
    </defs>
    <g transform="translate(680 320) scale(0.35714 0.33333)" shapeRendering="crispEdges">
      <polygon points={pth(SIDE)} fill="#474a4f" stroke="#101214" strokeWidth="1" />
      {BANDS.map((b, i) => (
        <polygon key={i} points={pth(low(b.pts))} fill={b.fill} />
      ))}
      {SIDE_THIN.map((l, i) => (
        <polyline key={i} points={pth(low(l))} fill="none" stroke="#15181a" strokeWidth="1" />
      ))}
      {SIDE_THICK.map((l, i) => (
        <polyline key={i} points={pth(low(l))} fill="none" stroke="#0c0e10" strokeWidth="2.4" strokeDasharray="5 1" />
      ))}
      <polygon points={pth(SIDE)} fill="none" stroke="#101214" strokeWidth="1" />
      <polygon points={pth(FACE)} fill="#8f96a1" stroke="#101214" strokeWidth="1" />

      <polygon points={pth(BORE)} fill="#5f6469" stroke="#101214" strokeWidth="1" />
      <polygon points={pth(BORE_LEFT)} fill="url(#boreLeft)" />
      <polygon points={pth(BORE_STRIP)} fill="#474b50" />
      <polygon points={pth(BORE_MID)} fill="url(#boreMid)" />
      {DARK_SLOTS.slice(0, 2).map((s, i) => (
        <polygon key={i} points={pth(s)} fill="#2c3032" stroke="#101214" strokeWidth="1" />
      ))}
      <polygon points={pth(THROUGH)} fill="#282c2e" stroke="#101214" strokeWidth="1" />
      <polygon points={pth(DARK_SLOTS[3])} fill="#2c3032" />
      {BORE_LINES.map((l, i) => (
        <polyline key={i} points={pth(l)} fill="none" stroke="#101214" strokeWidth="1" />
      ))}

      {WINDOWS.map((w, i) => (
        <g key={i}>
          <polygon points={pth(w.pts)} fill={w.fill} stroke="#101214" strokeWidth="1" />
          {w.lit && <polygon points={pth(w.lit)} fill="url(#lit)" />}
          {w.lines.map((l, j) => (
            <polyline key={j} points={pth(l)} fill="none" stroke="#15181a" strokeWidth="1" />
          ))}
          <polygon points={pth(w.pts)} fill="none" stroke="#101214" strokeWidth="1" />
        </g>
      ))}
      {TOOTH_GAPS.map((g, i) => (
        <polygon key={i} points={pth(g.pts)} fill={g.fill} />
      ))}
      {WINDOW_LINES.map((l, i) => (
        <polyline key={i} points={pth(low(l))} fill="none" stroke="#15181a" strokeWidth="1" />
      ))}
      <polygon points={pth(DARK_SLOTS[2])} fill="#2c3032" stroke="#15181a" strokeWidth="1" />
      <polygon points={pth(DARK_SLOTS[4])} fill="#2c3032" stroke="#15181a" strokeWidth="1" />

      {SLOT_MARKS.map((m, i) => (
        <polygon key={i} points={pth(m)} fill="#7a808a" stroke="#0c0e10" strokeWidth="1.300" />
      ))}
      {BOLTS.map(([cx, cy], i) => (
        <ellipse key={i} cx={cx} cy={cy} rx="13" ry="11" fill="#4b4f54" stroke="#15181a" strokeWidth="1" />
      ))}
    </g>
    <g transform="translate(680 320) scale(0.35714 0.33333)">
      {ORANGE.map((l, i) => (
        <polyline key={i} points={pth(l)} fill="none" stroke="#b0763a" strokeWidth="1" strokeDasharray="9 3 2 3" />
      ))}
    </g>
    <path d="M971 586L973 603" stroke="#2fe02f" strokeWidth="1.400" />
    <path d="M973 603L970 621" stroke="#2ce4e8" strokeWidth="1.400" />
    <path d="M973 603H997" stroke="#e83030" strokeWidth="1.400" />
    <circle cx="970" cy="586" r="3" fill="#2fe02f" />
    <circle cx="970" cy="621" r="2.600" fill="#2ce4e8" />
    <circle cx="997" cy="603" r="2" fill="#e83030" />
  </ModelSvg>
);

/* ---------- page ---------- */

const TABS: [string, number][] = [
  ['分析', 54], ['注释', 53], ['渲染', 53], ['工具', 53], ['视图', 53], ['柔性建模', 83], ['应用程序', 83],
];

const TREE: { icon: 'ext' | 'pat' | 'grp'; label: string }[] = [
  { icon: 'ext', label: '定子铁芯主体' },
  { icon: 'ext', label: '拉伸 2' },
  { icon: 'pat', label: '下线槽' },
  { icon: 'grp', label: '组LOCAL_GROUP_2' },
  { icon: 'pat', label: '阵列 4 / LOCAL_GROUP' },
  { icon: 'grp', label: '组LOCAL_GROUP_9' },
  { icon: 'grp', label: '组LOCAL_GROUP_11' },
];

const TreeKind = ({ k }: { k: 'ext' | 'pat' | 'grp' }) =>
  k === 'ext' ? <ExtrudeSmall /> : k === 'pat' ? <PatternSmall /> : <GroupIcon />;

const Small = ({ icon, label, off, caret, gap }: { icon: React.ReactNode; label: string; off?: boolean; caret?: boolean; gap?: number }) => (
  <SmallRow $off={off} $gap={gap}>
    {icon}
    {label}
    {caret && <RowCaret $c={off ? '#bdbdbd' : '#8a8a8a'} />}
  </SmallRow>
);

export default function App() {
  return (
    <Window>
      <GlobalStyle />
      <TitleBar>
        <Qat>
          <QatSlot $w={20}>{QAT_ICONS.app}</QatSlot>
          <QatSlot $w={6}><VSep /></QatSlot>
          <QatSlot $w={22}>{QAT_ICONS.file}</QatSlot>
          <QatSlot $w={24}>{QAT_ICONS.open}</QatSlot>
          <QatSlot $w={25}>{QAT_ICONS.save}</QatSlot>
          <QatSlot $w={23}>{QAT_ICONS.undo}</QatSlot>
          <QatSlot $w={12}><Caret $c="#a8a8a8" /></QatSlot>
          <QatSlot $w={26}>{QAT_ICONS.redo}</QatSlot>
          <QatSlot $w={12}><Caret $c="#a8a8a8" /></QatSlot>
          <QatSlot $w={26}>{QAT_ICONS.regen}</QatSlot>
          <QatSlot $w={24}>{QAT_ICONS.win}</QatSlot>
          <QatSlot $w={12}><Caret /></QatSlot>
          <QatSlot $w={26}>{QAT_ICONS.folder}</QatSlot>
          <QatSlot $w={3}><VSep /></QatSlot>
          <QatSlot $w={22}><Caret $c="#333" /></QatSlot>
        </Qat>
        <Title>定子组件_203_0_1109_M3K_000 (活动的) - PTC Creo Parametric 3.0</Title>
        <WinControls>
          <svg width="10" height="10" viewBox="0 0 10 10"><rect x="0.5" y="5.5" width="8" height="3.500" fill="none" stroke="#555" /></svg>
          <svg width="11" height="11" viewBox="0 0 11 11"><rect x="0.5" y="0.5" width="10" height="10" fill="none" stroke="#555" /><rect x="2.500" y="3.500" width="6" height="4" fill="none" stroke="#555" /></svg>
          <svg width="12" height="12" viewBox="0 0 12 12"><path d="M1 1l10 10M11 1L1 11" stroke="#666" strokeWidth="2.200" /><path d="M1 1l10 10M11 1L1 11" stroke="#fff" strokeWidth="0.800" /></svg>
        </WinControls>
      </TitleBar>

      <TabRow>
        <Tab $w={55} $first>文件<Caret $c="#666" /></Tab>
        <Tab $w={52} $active>模型</Tab>
        {TABS.map(([t, w]) => (
          <Tab key={t} $w={w}>{t}</Tab>
        ))}
        <HelpIcons>
          <Spaced $mr={7}>
            <svg width="12" height="10" viewBox="0 0 12 10"><path d="M1 5l5-4 5 4M1 9l5-4 5 4" fill="none" stroke="#444" strokeWidth="1.200" /></svg>
          </Spaced>
          <Spaced $mr={6}>
            <svg width="17" height="17" viewBox="0 0 17 17"><circle cx="10" cy="7" r="5" fill="none" stroke="#333" strokeWidth="2.200" /><path d="M6.500 10.500L2 15.500" stroke="#333" strokeWidth="2.800" /></svg>
          </Spaced>
          <svg width="17" height="17" viewBox="0 0 17 17"><circle cx="8.500" cy="8.500" r="8" fill="#444" /><path d="M3.500 7l5-2.500 5 2.500-5 2.500z" fill="#fff" /><path d="M5.500 9.500c1 3 5 3 6 0" fill="none" stroke="#fff" strokeWidth="1.400" /></svg>
          <Caret $c="#a8a8a8" $ml={6} $mr={7} />
          <svg width="17" height="18" viewBox="0 0 17 18"><ellipse cx="8.500" cy="9" rx="8" ry="8.800" fill="#333" /><path d="M5.500 6.500c0-3.500 6-3.500 6 0 0 2.500-3 2.500-3 4.500" fill="none" stroke="#fff" strokeWidth="2" /><rect x="7.500" y="12.500" width="2" height="2" fill="#fff" /></svg>
        </HelpIcons>
      </TabRow>

      <Ribbon>
        <Group $w={129}>
          <GroupBody $first>
            <Large $w={62}>
              <LargeIcon>{R.regen}</LargeIcon>
              重新生成
              <LargeCaret />
            </Large>
            <SmallCol $w={63} $ml={1}>
              <Small off icon={R.copy} label="复制" gap={4} />
              <Small off caret icon={R.paste} label="粘贴" gap={4} />
              <Small off caret icon={R.del} label="删除" gap={4} />
            </SmallCol>
          </GroupBody>
          <GroupLabel>操作<Caret /></GroupLabel>
        </Group>
        <Group $w={108}>
          <GroupBody $pl={9}>
            <SmallCol $w={96}>
              <Small icon={R.udf} label="用户定义特征" gap={1} />
              <Small icon={R.copyGeom} label="复制几何" />
              <Small icon={R.shrink} label="收缩包络" />
            </SmallCol>
          </GroupBody>
          <GroupLabel>获取数据<Caret /></GroupLabel>
        </Group>
        <Group $w={150}>
          <GroupBody>
            <Large $w={46}>
              <LargeIcon>{R.plane}</LargeIcon>
              平面
            </Large>
            <SmallCol $w={60}>
              <Small icon={R.axis} label="轴" gap={2} />
              <Small caret icon={R.point} label="点" gap={2} />
              <Small icon={R.csys} label="坐标系" gap={2} />
            </SmallCol>
            <Large $w={38}>
              <LargeIcon>{R.sketch}</LargeIcon>
              草绘
            </Large>
          </GroupBody>
          <GroupLabel>基准<Caret /></GroupLabel>
        </Group>
        <Group $w={123}>
          <GroupBody>
            <Large $w={46}>
              <LargeIcon>{R.extrude}</LargeIcon>
              拉伸
            </Large>
            <SmallCol $w={72} $ml={2}>
              <Small icon={R.revolve} label="旋转" gap={2} />
              <Small caret icon={R.sweep} label="扫描" gap={2} />
              <Small icon={R.sweptBlend} label="扫描混合" gap={2} />
            </SmallCol>
          </GroupBody>
          <GroupLabel>形状<Caret /></GroupLabel>
        </Group>
        <Group $w={151}>
          <GroupBody $pl={8}>
            <SmallCol $w={78}>
              <Small icon={R.hole} label="孔" gap={2} />
              <Small caret icon={R.round} label="倒圆角" gap={2} />
              <Small caret icon={R.chamfer} label="倒角" gap={2} />
            </SmallCol>
            <SmallCol $w={62}>
              <Small caret icon={R.draft} label="拔模" gap={2} />
              <Small icon={R.shell} label="壳" gap={2} />
              <Small caret icon={R.rib} label="筋" gap={2} />
            </SmallCol>
          </GroupBody>
          <GroupLabel>工程<Caret /></GroupLabel>
        </Group>
        <Group $w={215}>
          <GroupBody>
            <Large $w={46}>
              <LargeIcon>{R.pattern}</LargeIcon>
              阵列
              <LargeCaret />
            </Large>
            <SmallCol $w={52} $ml={2}>
              <Small off icon={R.mirror} label="镜像" gap={4} />
              <Small off icon={R.trim} label="修剪" gap={4} />
              <Small off icon={R.merge} label="合并" gap={4} />
            </SmallCol>
            <SmallCol $w={52}>
              <Small off icon={R.extend} label="延伸" gap={4} />
              <Small off icon={R.offset} label="偏移" gap={4} />
              <Small off icon={R.intersect} label="相交" gap={4} />
            </SmallCol>
            <SmallCol $w={60}>
              <Small icon={R.project} label="投影" gap={4} />
              <Small off icon={R.thicken} label="加厚" gap={4} />
              <Small off icon={R.solidify} label="实体化" gap={4} />
            </SmallCol>
          </GroupBody>
          <GroupLabel>编辑<Caret /></GroupLabel>
        </Group>
        <Group $w={111}>
          <GroupBody>
            <Large $w={48}>
              <LargeIcon>{R.boundary}</LargeIcon>
              边界
              <br />
              混合
            </Large>
            <SmallCol $w={60} $ml={1}>
              <Small icon={R.fill} label="填充" gap={3} />
              <Small icon={R.style} label="样式" gap={1} />
              <Small icon={R.free} label="自由式" gap={1} />
            </SmallCol>
          </GroupBody>
          <GroupLabel>曲面<Caret /></GroupLabel>
        </Group>
        <Group $w={70}>
          <GroupBody>
            <Large $w={70}>
              <LargeIcon>{R.comp}</LargeIcon>
              元件
              <br />
              界面
            </Large>
          </GroupBody>
          <GroupLabel>模型意图<Caret /></GroupLabel>
        </Group>
      </Ribbon>

      <Body>
        <LeftCol>
          <PanelTabs>
            <PanelTab $active><TreeGlyph /></PanelTab>
            <PanelTab>
              <Svg s={20} v={20}>
                <path d="M1 12V2h5l1 1h5v9z" fill="#eedfb8" stroke="#a89468" />
                <path d="M4 15V5h5l1 1h5v9z" fill="#f2e5c4" stroke="#a89468" />
                <path d="M7 18.500V8h12v10.500z" fill="#f7e7bd" stroke="#9a7f45" />
              </Svg>
            </PanelTab>
            <PanelTab>
              <Svg s={18} v={18}>
                <path d="M1 3h6l1 2h9v11H1z" fill="#f7e2ad" stroke="#9a7f45" />
                <path d="M9 8v5M6.500 10.500h5M7 8.500l4 4M11 8.500l-4 4" stroke={TEAL} strokeWidth="1.100" />
              </Svg>
            </PanelTab>
          </PanelTabs>
          <Panel>
            <PanelHead>
              <HeadTop>
                <HeadTitle>模型树</HeadTitle>
                <Svg s={20} v={20}>
                  <path d="M1 2h12v3H1z" fill="#6e6e6e" />
                  <path d="M4 5h4v15H4z" fill="#c9a35e" stroke="#8e713f" strokeWidth="0.600" />
                  <path d="M14 0.500h2v9h-2z" fill="#666" />
                  <path d="M13.500 9h3v11h-3z" fill="#c9a35e" stroke="#8e713f" strokeWidth="0.600" />
                </Svg>
                <Caret $ml={10} $mr={10} />
                <Svg s={20} v={20}>
                  <path d="M3 0.500h10l4 4v15H3z" fill="#f8f8f8" stroke="#8a8a8a" />
                  <path d="M5 7h2v2H5zM5 11h2v2H5zM5 15h2v2H5z" fill="none" stroke="#555" strokeWidth="0.700" />
                  <path d="M9 8h6M9 12h6M9 16h6" stroke="#666" />
                </Svg>
                <Caret $ml={8} $mr={1} />
              </HeadTop>
              <HeadBottom>
                <SearchBox>×</SearchBox>
                <Caret $ml={6} $mr={10} />
                <Binoculars />
                <Spaced $ml={10} $mr={12}>
                  <svg width="16" height="16" viewBox="0 0 16 16">
                    <path d="M1 2h14L9.500 8v6l-3-2V8z" fill="#fafafa" stroke="#c0c0c0" />
                  </svg>
                </Spaced>
                <svg width="12" height="12" viewBox="0 0 12 12">
                  <path d="M6 1v10M1 6h10" stroke="#a8a8a8" strokeWidth="3" />
                </svg>
              </HeadBottom>
            </PanelHead>
            <Tree>
              <TreeRow $root>
                <RootIcon>
                  <Svg s={15} v={15}>
                    <path d="M1 5l4-4h9v9l-4 4H1z" fill={BLUE} stroke={TEAL} />
                    <path d="M1 5h9v9M10 5l4-4" fill="none" stroke={TEAL} />
                    <path d="M10 5l4-4v9l-4 4z" fill="#5ca7c7" />
                  </Svg>
                </RootIcon>
                定子组件_203_0_1109_M3K_000.PRT
              </TreeRow>
              {['RIGHT', 'TOP', 'FRONT'].map((t) => (
                <TreeRow key={t} $off>
                  <Twist $hide />
                  <TreeIcon $off><PlaneDatum /></TreeIcon>
                  {t}
                </TreeRow>
              ))}
              <TreeRow $off>
                <Twist $hide />
                <TreeIcon $off>
                  <Svg>
                    <path d="M8 1L7 15M1 8h12M3 2l10 12M13 2L3 14" stroke="#bdb9a8" />
                  </Svg>
                </TreeIcon>
                PRT_CSYS_DEF
              </TreeRow>
              {TREE.map((n) => (
                <TreeRow key={n.label}>
                  <Twist />
                  <TreeIcon><TreeKind k={n.icon} /></TreeIcon>
                  {n.label}
                </TreeRow>
              ))}
              <TreeRow $off>
                <Twist $hide />
                <TreeIcon $off><PlaneDatum /></TreeIcon>
                DTM1
              </TreeRow>
              <TreeRow $off>
                <Twist $hide />
                <TreeIcon $off>
                  <Svg>
                    <path d="M1 14C2 6 5 3 8 3s6 3 7 11" fill="none" stroke="#bdb9a8" strokeWidth="1.300" />
                  </Svg>
                </TreeIcon>
                草绘 1
              </TreeRow>
              <TreeRow>
                <Twist />
                <TreeIcon><GroupIcon /></TreeIcon>
                组铆点
              </TreeRow>
              <TreeRow>
                <Twist $hide />
                <TreeIcon>
                  <Svg>
                    <path d="M3 6h5V2l6 6-6 6v-4H3z" fill="#0a8a0a" stroke="#064" strokeWidth="0.500" />
                  </Svg>
                </TreeIcon>
                在此插入
              </TreeRow>
            </Tree>
          </Panel>
        </LeftCol>

        <Viewport>
          <Model />
          <ViewBar>
            {VIEW_ICONS.map((ic, i) => (
              <ViewBtn key={i} $on={i >= 8}>{ic}</ViewBtn>
            ))}
          </ViewBar>
        </Viewport>
      </Body>

      <StatusBar>
        <StatusBtn $on><TreeGlyph /></StatusBtn>
        <StatusBtn>
          <Svg s={18} v={18}>
            <circle cx="9" cy="9" r="7.500" fill="#2f9be0" />
            <path d="M5 4c3 1 5 3 4 5s-4 2-4 0zM11 10c3-1 4 1 3 3s-3 2-3 0z" fill="#bfe6fb" />
            <path d="M1 13C5 13 13 6 17 2" fill="none" stroke="#666" strokeWidth="1.300" />
          </Svg>
        </StatusBtn>
        <StatusSep $ml={5} />
        <StatusSep $ml={1253} />
        <StatusSep $ml={29} />
        <Dot $on $ml={6} />
        <Dot $ml={2} />
        <Dot $ml={1} />
        <StatusSep $ml={4} />
        <Spaced $ml={5}>
          <svg width="13" height="18" viewBox="0 0 13 18">
            <path d="M1 0v18" stroke="#b4b4b4" strokeWidth="1.600" />
            <path d="M2 1l10 3.500L2 9z" fill="#b9b9b9" />
          </svg>
        </Spaced>
        <StatusSep $ml={17} />
        <FindBtn><Binoculars s={18} c="#555" d="#222" /></FindBtn>
        <StatusSep $ml={3} />
        <SmartSelect>智能<Caret $c="#a8a8a8" /></SmartSelect>
      </StatusBar>

      <Watermark>
        <WmLogo width="60" height="60" viewBox="0 0 60 60">
          <ellipse cx="24" cy="25" rx="24" ry="14" transform="rotate(42 24 25)" fill="none" stroke="#1f4a6e" strokeWidth="3" opacity="0.8" />
          <ellipse cx="40" cy="40" rx="17" ry="10" transform="rotate(-60 40 40)" fill="none" stroke="#b8403f" strokeWidth="3" opacity="0.75" />
          <ellipse cx="22" cy="42" rx="10" ry="7" fill="none" stroke="#9fb9cc" strokeWidth="1.500" opacity="0.7" />
        </WmLogo>
        <WmTitle>野火论坛</WmTitle>
        <WmUrl>www.proewildfire.cn</WmUrl>
      </Watermark>
    </Window>
  );
}
